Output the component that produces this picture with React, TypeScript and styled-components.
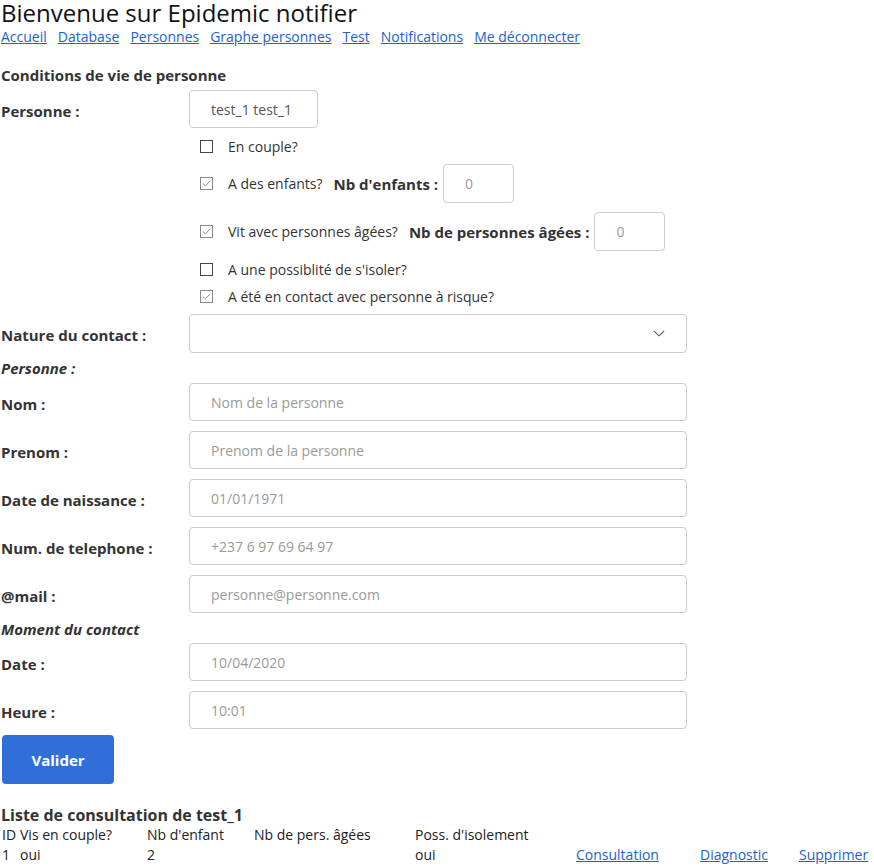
import React from "react";
import styled, { createGlobalStyle } from "styled-components";

const GlobalStyle = createGlobalStyle`
  html, body { margin: 0; padding: 0; background: #fff; }
  body { font-family: "Open Sans", "Liberation Sans", sans-serif; font-size: 14px; color: #333; }
  * { box-sizing: border-box; }
`;

const Page = styled.div`
  padding: 0 0 0 1px;
  width: 874px;
`;

const Title = styled.h1`
  margin: 0;
  font-size: 24px;
  font-weight: 400;
  line-height: 26px;
  color: #111;
`;

const Nav = styled.nav`
  display: flex;
  gap: 11px;
  margin-top: 1px;
  line-height: 20px;
`;

const NavLink = styled.a`
  color: #1a62cf;
  text-decoration: underline;
  font-size: 14px;
`;

const SectionTitle = styled.div<{ $mt: number; $mb: number; $italic?: boolean; $size?: number }>`
  font-weight: 700;
  font-size: ${(p) => p.$size ?? 15}px;
  line-height: 20px;
  color: #333;
  margin-top: ${(p) => p.$mt}px;
  margin-bottom: ${(p) => p.$mb}px;
  font-style: ${(p) => (p.$italic ? "italic" : "normal")};
`;

const FormRow = styled.div<{ $mb?: number }>`
  display: flex;
  align-items: center;
  margin-bottom: ${(p) => p.$mb ?? 10}px;
`;

const Label = styled.label`
  width: 188px;
  flex: none;
  font-weight: 700;
  font-size: 15px;
  color: #333;
  line-height: 20px;
  padding-top: 3px;
`;

const Field = styled.div<{ $w: number; $h?: number }>`
  width: ${(p) => p.$w}px;
  height: ${(p) => p.$h ?? 38}px;
  border: 1px solid #ccc;
  border-radius: 4px;
  display: flex;
  align-items: center;
  justify-content: space-between;
  padding: 0 21px;
  flex: none;
  background: #fff;
`;

const FieldText = styled.span<{ $value?: boolean }>`
  color: ${(p) => (p.$value ? "#555" : "#999")};
  font-size: 14px;
  white-space: nowrap;
`;

const Checks = styled.div`
  display: flex;
  flex-direction: column;
  padding: 8px 0 8px 199px;
`;

const CheckRow = styled.div<{ $h: number; $mb?: number }>`
  display: flex;
  align-items: center;
  height: ${(p) => p.$h}px;
  margin-bottom: ${(p) => p.$mb ?? 0}px;
  color: #333;
`;

const Box = styled.span<{ $checked?: boolean }>`
  width: 13px;
  height: 13px;
  flex: none;
  border: 1px solid ${(p) => (p.$checked ? "#8a8a8a" : "#444")};
  display: flex;
  align-items: center;
  justify-content: center;
  margin-right: 15px;
  background: #fff;
`;

const InlineLabel = styled.span`
  font-weight: 700;
  font-size: 15px;
  margin: 0 5px 0 11px;
  color: #333;
`;

const Button = styled.button`
  width: 112px;
  height: 49px;
  margin: 6px 0 0 1px;
  background: #2f6fd7;
  color: #fff;
  font-family: "Open Sans", "Liberation Sans", sans-serif;
  font-weight: 700;
  font-size: 15px;
  border: none;
  border-radius: 4px;
  display: block;
`;

const Table = styled.div`
  display: grid;
  grid-template-columns: 18px 127px 107px 161px 161px 124px 99px auto;
  line-height: 20px;
  color: #222;
  padding-left: 1px;
`;

const Cell = styled.div`
  white-space: nowrap;
`;

const TableLink = styled.a`
  color: #1a62cf;
  text-decoration: underline;
`;

const Check = () => (
  <svg width="9" height="7" viewBox="0 0 9 7">
    <path d="M0.8 3.4 L3.4 5.8 L8.2 0.8" fill="none" stroke="#8a8a8a" strokeWidth="1" />
  </svg>
);

const Chevron = () => (
  <svg width="12" height="7" viewBox="0 0 12 7">
    <path d="M0.8 0.8 L6 5.8 L11.2 0.8" fill="none" stroke="#555" strokeWidth="1.1" />
  </svg>
);

export default function App() {
  const links = ["Accueil", "Database", "Personnes", "Graphe personnes", "Test", "Notifications", "Me déconnecter"];
  return (
    <Page>
      <GlobalStyle />
      <Title>Bienvenue sur Epidemic notifier</Title>
      <Nav>
        {links.map((l) => (
          <NavLink key={l} href="#">{l}</NavLink>
        ))}
      </Nav>
      <SectionTitle $mt={18} $mb={5}>Conditions de vie de personne</SectionTitle>
      <FormRow $mb={0}>
        <Label>Personne :</Label>
        <Field $w={129}><FieldText $value>test_1 test_1</FieldText></Field>
      </FormRow>
      <Checks>
        <CheckRow $h={20} $mb={8}><Box />En couple?</CheckRow>
        <CheckRow $h={39} $mb={9}>
          <Box $checked><Check /></Box>A des enfants?
          <InlineLabel>Nb d'enfants :</InlineLabel>
          <Field $w={71} $h={39}><FieldText>0</FieldText></Field>
        </CheckRow>
        <CheckRow $h={39} $mb={8}>
          <Box $checked><Check /></Box>Vit avec personnes âgées?
          <InlineLabel>Nb de personnes âgées :</InlineLabel>
          <Field $w={71} $h={39}><FieldText>0</FieldText></Field>
        </CheckRow>
        <CheckRow $h={20} $mb={7}><Box />A une possiblité de s'isoler?</CheckRow>
        <CheckRow $h={20}><Box $checked><Check /></Box>A été en contact avec personne à risque?</CheckRow>
      </Checks>
      <FormRow $mb={0}>
        <Label>Nature du contact :</Label>
        <Field $w={498} $h={39}><span /><Chevron /></Field>
      </FormRow>
      <SectionTitle $mt={5} $mb={5} $italic>Personne :</SectionTitle>
      <FormRow><Label>Nom :</Label><Field $w={498}><FieldText>Nom de la personne</FieldText></Field></FormRow>
      <FormRow><Label>Prenom :</Label><Field $w={498}><FieldText>Prenom de la personne</FieldText></Field></FormRow>
      <FormRow><Label>Date de naissance :</Label><Field $w={498}><FieldText>01/01/1971</FieldText></Field></FormRow>
      <FormRow><Label>Num. de telephone :</Label><Field $w={498}><FieldText>+237 6 97 69 64 97</FieldText></Field></FormRow>
      <FormRow $mb={0}><Label>@mail :</Label><Field $w={498}><FieldText>personne@personne.com</FieldText></Field></FormRow>
      <SectionTitle $mt={6} $mb={4} $italic>Moment du contact</SectionTitle>
      <FormRow><Label>Date :</Label><Field $w={498}><FieldText>10/04/2020</FieldText></Field></FormRow>
      <FormRow $mb={0}><Label>Heure :</Label><Field $w={498}><FieldText>10:01</FieldText></Field></FormRow>
      <Button>Valider</Button>
      <SectionTitle $mt={21} $mb={0} $size={16}>Liste de consultation de test_1</SectionTitle>
      <Table>
        <Cell>ID</Cell>
        <Cell>Vis en couple?</Cell>
        <Cell>Nb d'enfant</Cell>
        <Cell>Nb de pers. âgées</Cell>
        <Cell>Poss. d'isolement</Cell>
        <Cell />
        <Cell />
        <Cell />
        <Cell>1</Cell>
        <Cell>oui</Cell>
        <Cell>2</Cell>
        <Cell />
        <Cell>oui</Cell>
        <Cell><TableLink href="#">Consultation</TableLink></Cell>
        <Cell><TableLink href="#">Diagnostic</TableLink></Cell>
        <Cell><TableLink href="#">Supprimer</TableLink></Cell>
      </Table>
    </Page>
  );
}
